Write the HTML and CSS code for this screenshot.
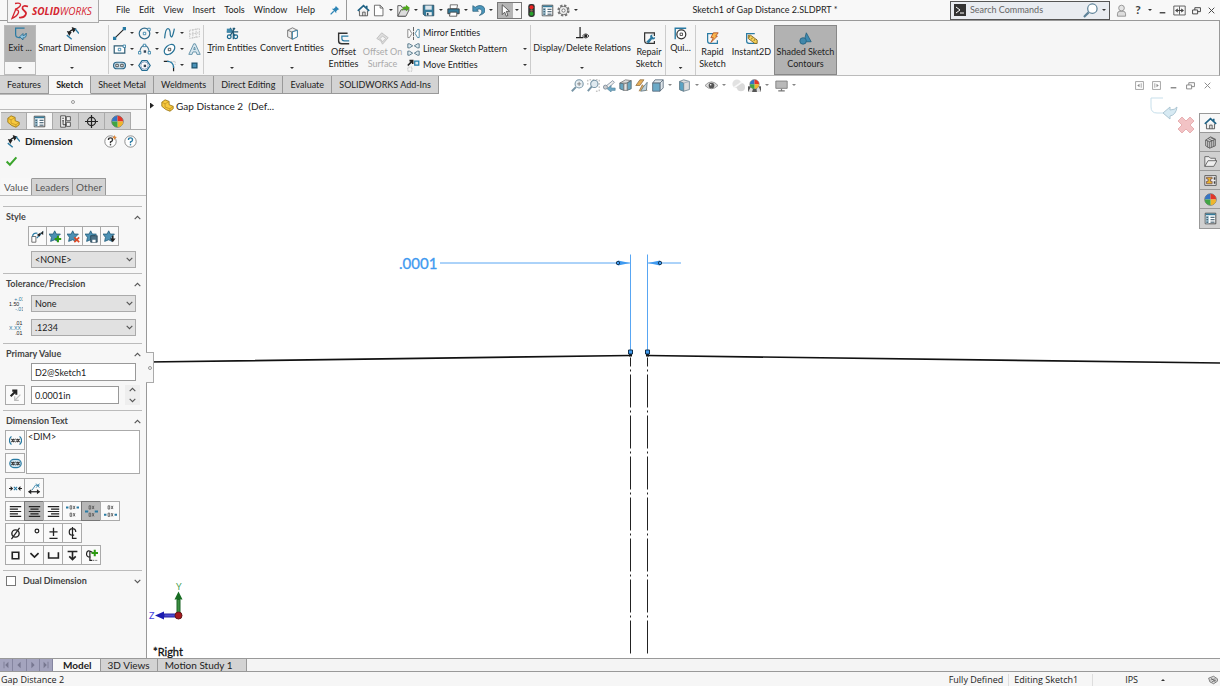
FILE: index.html
```html
<!DOCTYPE html>
<html lang="en">
<head>
<meta charset="utf-8">
<title>Sketch1 of Gap Distance 2.SLDPRT *</title>
<link rel="stylesheet" href="styles.css">
</head>
<body>
<svg class="sprite" aria-hidden="true">
  <symbol id="home" viewBox="0 0 16 16"><path d="M3 8v6.500h10V8" fill="#eee" stroke="#444"/><path d="M7 14.500V10h3v4.500" fill="none" stroke="#444"/><path d="M1 8.500 8 2l7 6.500M12 5V2" fill="none" stroke="#1f6285" stroke-width="2"/></symbol>
  <symbol id="new" viewBox="0 0 16 16"><path d="M3 1.500h7l3.500 3.500v9.500H3zM10 1.500V5h3.500" fill="#fff" stroke="#555"/></symbol>
  <symbol id="open" viewBox="0 0 16 16"><path d="M1 15V2h4l1 2h4v11z" fill="#f0f0f0" stroke="#444"/><path d="M1 15l4-8h10l-4 8z" fill="#ddd" stroke="#444"/><path d="M6 9c0-4 2-6 5-6V1l5 4-5 4V6c-2 0-4 0-5 3z" fill="#4fa81c"/></symbol>
  <symbol id="save" viewBox="0 0 16 16"><path d="M1.500 1.500h13v13h-11l-2-2z" fill="#347b9b" stroke="#27475a"/><path d="M4 2h8v5H4z" fill="#dce6ec"/><path d="M5 10h7v4H5z" fill="#eee"/><path d="M6 11h2v3H6z" fill="#27475a"/></symbol>
  <symbol id="print" viewBox="0 0 16 16"><path d="M4 1h9l-1 5H4z" fill="#fff" stroke="#555"/><path d="M1 6h14v6H1z" fill="#347b9b" stroke="#333"/><path d="M4 10h8v5H3z" fill="#fff" stroke="#444"/></symbol>
  <symbol id="undo" viewBox="0 0 16 16"><path d="M1 2v7h7L6 7c4-2 6 0 6 2s-1 4-3 5c4-1 7-3 7-6 0-6-7-8-12-4z" fill="#4b95ba" stroke="#1e5470" stroke-width=".8"/></symbol>
  <symbol id="cursor" viewBox="0 0 16 16"><path d="M4 1v12l3-3 2 5 2-1-2-5h4z" fill="#fff" stroke="#444"/></symbol>
  <symbol id="lights" viewBox="0 0 16 16"><rect x="4" y="0" width="8" height="16" rx="3" fill="#333"/><circle cx="8" cy="4" r="2.500" fill="#e22"/><circle cx="8" cy="8" r="1.500" fill="#865"/><circle cx="8" cy="12" r="2.500" fill="#28a22b"/></symbol>
  <symbol id="list" viewBox="0 0 16 16"><path d="M1.500 1.500h13v13h-13z" fill="#fff" stroke="#333"/><path d="M2 2h12v2H2z" fill="#347b9b"/><path d="M2 5h4v9H2z" fill="#a4c4d3"/><path d="M3 6.500h2M3 9.500h2M3 12.500h2M8 6.500h5M8 9.500h5M8 12.500h5" stroke="#27475a" stroke-width="1.200"/></symbol>
  <symbol id="gear" viewBox="0 0 16 16"><circle cx="8" cy="8" r="6" fill="none" stroke="#777" stroke-width="3" stroke-dasharray="2.800 1.900"/><circle cx="8" cy="8" r="5" fill="#eee" stroke="#666"/><circle cx="8" cy="8" r="2" fill="#fff" stroke="#666"/></symbol>
  <symbol id="pin" viewBox="0 0 16 16"><path d="M9 1l6 6-2 0-3 3v3L3 6h3l3-3z" fill="#2c84b5"/><path d="M6 10l-5 5" stroke="#2c84b5" stroke-width="2"/></symbol>
  <symbol id="exit" viewBox="0 0 16 16"><path d="M13 1.500H2V9q0 4 4 4h2" fill="none" stroke="#2a7ba3" stroke-width="1.500"/><path d="M7 12l4-4v2.500q3 0 4-3 1 6-4 6V16z" fill="#8cc3e0" stroke="#23668a"/></symbol>
  <symbol id="dim" viewBox="0 0 16 16"><path d="M3 8Q5 4 10 3" fill="none" stroke="#222" stroke-width="1.500"/><path d="M1 5l6 1-3 5zM7 0l6 2-4 5z" fill="#222"/><path d="M1 10l6 5M11 2l5 6" stroke="#2a7ba3" stroke-width="1.700"/></symbol>
  <symbol id="line" viewBox="0 0 16 16"><path d="M2.500 13.500l11-11" stroke="#222" stroke-width="1.300"/><path d="M0 12h4v4H0zM12 0h4v4h-4z" fill="#287aa3"/></symbol>
  <symbol id="circle" viewBox="0 0 16 16"><circle cx="8" cy="8" r="6.500" fill="none" stroke="#346d8d" stroke-width="1.500"/><path d="M6.500 6.500h3v3h-3zM12 1.500h3v3h-3z" fill="#fff" stroke="#287aa3"/></symbol>
  <symbol id="spline" viewBox="0 0 16 16"><path d="M2 14Q3 2 6 2t3 8q2 7 5-8" fill="none" stroke="#267296" stroke-width="1.500"/></symbol>
  <symbol id="plane" viewBox="0 0 16 16"><path d="M2 4l12-2v10L2 14zM6 3v11M10 2v11M2 9l12-2" fill="none" stroke="#bbb" stroke-dasharray="2 1"/></symbol>
  <symbol id="rect" viewBox="0 0 16 16"><path d="M1.500 3.500h13v9h-13z" fill="#fff" stroke="#315e76" stroke-width="1.500"/><path d="M6.500 6.500h3v3h-3zM12.500 2.500h3v3h-3z" fill="#fff" stroke="#287aa3"/></symbol>
  <symbol id="arc" viewBox="0 0 16 16"><path d="M2 12Q3 3 8 3t6 9" fill="none" stroke="#346d8d" stroke-width="1.300"/><path d="M.5 10.500h3v3h-3zM12.500 10.500h3v3h-3zM6.500 1.500h3v3h-3z" fill="#fff" stroke="#287aa3"/><path d="M7 9h3v3H7z" fill="#345"/></symbol>
  <symbol id="ellipse" viewBox="0 0 16 16"><ellipse cx="8" cy="8" rx="7.500" ry="5" transform="rotate(-42 8 8)" fill="#fff" stroke="#267296" stroke-width="1.500"/><path d="M6.500 6.500h3v3h-3z" fill="none" stroke="#333"/></symbol>
  <symbol id="letter" viewBox="0 0 16 16"><path d="M1 14L7 1h2l6 13h-4l-1-3H6l-1 3zM7 8h2L8 5z" fill="#d7e6ee" stroke="#51869f"/></symbol>
  <symbol id="slot" viewBox="0 0 16 16"><rect x=".7" y="4" width="14.600" height="8" rx="4" fill="#c8dfeb" stroke="#2c6789" stroke-width="1.500"/><path d="M3.500 6.500h3v3h-3zM9.500 6.500h3v3h-3z" fill="#fff" stroke="#333"/></symbol>
  <symbol id="poly" viewBox="0 0 16 16"><path d="M5 2h6l4 6-4 6H5L1 8z" fill="#fff" stroke="#246d93" stroke-width="1.500"/><circle cx="8" cy="8" r="4.500" fill="none" stroke="#89b"/><path d="M7 7h3v3H7z" fill="#345"/></symbol>
  <symbol id="fillet" viewBox="0 0 16 16"><path d="M1 3h6M13 9v6" stroke="#222" stroke-width="1.500"/><path d="M5 3q8 0 8 8" fill="none" stroke="#287aa3" stroke-width="1.500"/><path d="M10 3h5v4" fill="none" stroke="#aaa" stroke-dasharray="1 1"/></symbol>
  <symbol id="point" viewBox="0 0 16 16"><path d="M5 5h6v6H5z" fill="#4a93b9" stroke="#1c526e" stroke-width="1.500"/></symbol>
  <symbol id="trim" viewBox="0 0 16 16"><path d="M5 1l6 10M11 1L5 11M9 1v14M1 6h14" stroke="#235a75" stroke-width="1.500"/><path d="M1 2h6v5H1z" fill="#4189ac"/><circle cx="4" cy="12" r="2.300" fill="none" stroke="#17678e" stroke-width="1.500"/><circle cx="12" cy="12" r="2.300" fill="none" stroke="#17678e" stroke-width="1.500"/></symbol>
  <symbol id="cube" viewBox="0 0 16 16"><path d="M2 4l6-3 6 3v8l-6 3-6-3z" fill="#eee" stroke="#666"/><path d="M2 4l5 2 7-2M7 6v9" fill="none" stroke="#666"/><path d="M8 6l6-2v8l-6 3z" fill="#fff" stroke="#2a7ba3"/></symbol>
  <symbol id="offset" viewBox="0 0 16 16"><path d="M13 1.500H2V11q0 3.500 4 3.500h9" fill="none" stroke="#333" stroke-width="1.700"/><path d="M14 5H6v3q0 3 3 3h6" fill="none" stroke="#2a7ba3" stroke-width="1.500"/></symbol>
  <symbol id="surf" viewBox="0 0 16 16"><path d="M1 8l6-7 8 6-7 8-2-4z" fill="#ddd" stroke="#bbb"/><path d="M5 8l3-3 4 3-4 4z" fill="#f4f4f4" stroke="#bbb"/></symbol>
  <symbol id="mirror" viewBox="0 0 16 16"><path d="M8 0v16" stroke="#444" stroke-dasharray="5 1"/><path d="M1 3v10h2l3-5-3-5z" fill="#fff" stroke="#777"/><path d="M15 3v10h-2l-3-5 3-5z" fill="#fff" stroke="#347b9b"/></symbol>
  <symbol id="pattern" viewBox="0 0 16 16"><path d="M1 1h2l4 2.500L3 6H1zM1 10h2l4 2.500L3 15H1zM15 1h-2L9 3.500 13 6h2zM15 10h-2l-4 2.500 4 2.500h2z" fill="#dbe8ee" stroke="#44677a"/></symbol>
  <symbol id="move" viewBox="0 0 16 16"><path d="M1 8l5-5M3 2h4v4" fill="none" stroke="#222" stroke-width="2"/><path d="M9.500 2.500h5v5h-5z" fill="#dcecf4" stroke="#237da9" stroke-width="1.500"/><path d="M1 10h5v5H1z" fill="none" stroke="#aaa" stroke-dasharray="1 1"/></symbol>
  <symbol id="relations" viewBox="0 0 16 16"><path d="M5 0v13M0 13h9" stroke="#222" stroke-width="1.500"/><path d="M8 11q4-5 8 0-4 5-8 0z" fill="#fff" stroke="#222"/><circle cx="12" cy="11" r="2" fill="#222"/></symbol>
  <symbol id="repair" viewBox="0 0 16 16"><path d="M14 5V1H2v9q0 4 4 4h8v-3" fill="none" stroke="#333" stroke-width="1.500"/><path d="M4 12l5-5q-1-4 3-4l-1 2 2 2 2-1q0 4-4 3l-4 5z" fill="#2b789f"/></symbol>
  <symbol id="snap" viewBox="0 0 16 16"><path d="M1.500 15V1.500H15" fill="none" stroke="#287aa3" stroke-width="1.700"/><circle cx="9" cy="9" r="5.500" fill="#fff" stroke="#333" stroke-width="1.500"/><path d="M7.500 7.500h3v3h-3z" fill="none" stroke="#333"/></symbol>
  <symbol id="rapid" viewBox="0 0 16 16"><path d="M14 10v4H5q-3 0-3-3V2h10" fill="none" stroke="#2a7ba3" stroke-width="1.500"/><path d="M9 1h6l-3 4h2l-8 8 3-6H6z" fill="#f9b74e" stroke="#b34a1c"/></symbol>
  <symbol id="instant" viewBox="0 0 16 16"><path d="M14 9v5H5q-3 0-3-3V2h10" fill="none" stroke="#2a7ba3" stroke-width="1.500"/><path d="M4 4h3l8 6v4h-3L4 8z" fill="#f5d15a" stroke="#775b16"/><path d="M6 5l-1 2M9 7l-1 2M12 9l-1 2" stroke="#775b16"/></symbol>
  <symbol id="shaded" viewBox="0 0 16 16"><path d="M9 1l6 11H6z" fill="#3e89b0" stroke="#24617f"/><circle cx="5" cy="11" r="4" fill="#4187aa" stroke="#24617f"/></symbol>
  <symbol id="mag" viewBox="0 0 16 16"><circle cx="10" cy="6" r="5" fill="#fff" stroke="#5d8298" stroke-width="1.300"/><path d="M6 10l-5 5" stroke="#5d8298" stroke-width="2.300"/></symbol>
  <symbol id="magfit" viewBox="0 0 16 16"><circle cx="10" cy="6" r="5" fill="#e8eff3" stroke="#7895a6" stroke-width="1.300"/><path d="M6 10l-5 5" stroke="#7895a6" stroke-width="2.500"/><path d="M7.500 6h5M10 3.500v5" stroke="#777"/></symbol>
  <symbol id="magarea" viewBox="0 0 16 16"><path d="M1 7V1h14v14h-4" fill="none" stroke="#999" stroke-dasharray="2 2"/><circle cx="9" cy="6" r="4.500" fill="#dfe9ef" stroke="#7895a6" stroke-width="1.300"/><path d="M6 9l-5 6" stroke="#7895a6" stroke-width="2.300"/></symbol>
  <symbol id="prev" viewBox="0 0 16 16"><path d="M2 10L12 2l2 2-7 7" fill="#eee" stroke="#789"/><path d="M5 12l5-4v3h5v3h-5v2z" fill="#6da7c4" stroke="#47778f" stroke-width=".6"/><circle cx="3" cy="10" r="2.500" fill="#ccc" stroke="#789"/></symbol>
  <symbol id="section" viewBox="0 0 16 16"><path d="M1 5l7-4 7 1-6 3z" fill="#ddd" stroke="#777"/><path d="M1 5l5 1v8l-5-2zM10 5l5-3v10l-5 2z" fill="#69a6c1" stroke="#52656e"/><path d="M6 6l4-1v9H6z" fill="#e2e2e2" stroke="#777"/></symbol>
  <symbol id="dyn" viewBox="0 0 16 16"><path d="M1 8L6 1h5L6 8zM5 15l4-8 6 7" fill="#e5ad56" stroke="#96754b"/><path d="M7 15l3-5 5-6-1 10z" fill="#c2d3db" stroke="#607785"/></symbol>
  <symbol id="orient" viewBox="0 0 16 16"><path d="M2 5l3-4h10v10l-4 4V5z" fill="#dfe6ea" stroke="#567"/><path d="M2 5h9v10H2z" fill="#6caac7" stroke="#567"/><path d="M11 5l4-4" stroke="#567"/></symbol>
  <symbol id="box" viewBox="0 0 16 16"><path d="M2 3l5-2 7 2v10l-7 2-5-2z" fill="#ddd" stroke="#69808c"/><path d="M2 3l5 2v10l-5-2z" fill="#5ba4c5" stroke="#69808c"/><path d="M7 5l7-2" stroke="#9ab"/></symbol>
  <symbol id="eye" viewBox="0 0 16 16"><path d="M0 8q8-9 16 0-8 8-16 0z" fill="#ddd" stroke="#888"/><circle cx="8" cy="8" r="3.500" fill="#555"/><circle cx="7" cy="7" r="1" fill="#fff"/></symbol>
  <symbol id="ballgrey" viewBox="0 0 16 16"><circle cx="6" cy="6" r="5.500" fill="#e2e2e2"/><circle cx="11" cy="10" r="5" fill="#dadada"/><path d="M2 11l10-7" stroke="#f8f8f8" stroke-width="2"/></symbol>
  <symbol id="ball" viewBox="0 0 16 16"><circle cx="8" cy="8" r="7" fill="#eee" stroke="#555"/><path d="M8 8V1a7 7 0 0 0-7 7z" fill="#3574c4"/><path d="M8 8V1a7 7 0 0 1 7 7z" fill="#e33629"/><path d="M8 8h7a7 7 0 0 1-7 7z" fill="#efb52c"/><path d="M8 8v7a7 7 0 0 1-7-7z" fill="#40a544"/></symbol>
  <symbol id="scene" viewBox="0 0 16 16"><path d="M0 16V9h16v7z" fill="#555"/><path d="M0 16l4-7h3l-2 7zM11 16l-1-7h3l3 7z" fill="#ddd"/><svg x="1" y="0" width="14" height="13"><use href="#ball"/></svg></symbol>
  <symbol id="monitor" viewBox="0 0 16 16"><path d="M1 2.500h14v9H1z" fill="#b9b9b9" stroke="#777"/><path d="M8 12v2M4 14.500h8" stroke="#777" stroke-width="1.500"/></symbol>
  <symbol id="user" viewBox="0 0 16 16"><circle cx="8" cy="5" r="3.500" fill="#e5e5e5" stroke="#888"/><path d="M3 15v-3q0-3 3-3h4q3 0 3 3v3z" fill="#ddd" stroke="#888"/></symbol>
  <symbol id="min" viewBox="0 0 16 16"><path d="M3 12h10" stroke="currentColor" stroke-width="2.500"/></symbol>
  <symbol id="span" viewBox="0 0 16 16"><path d="M1 2.500h14v11H1zM8 3v10" fill="none" stroke="currentColor"/><path d="M3 8h10M6 6L3.500 8 6 10M10 6l2.500 2L10 10" fill="none" stroke="currentColor" stroke-width="1.300"/></symbol>
  <symbol id="restore" viewBox="0 0 16 16"><path d="M1 7h9v7H1zM5 7V3h10v7h-5" fill="none" stroke="currentColor" stroke-width="1.700"/></symbol>
  <symbol id="close" viewBox="0 0 16 16"><path d="M3 3l10 10M13 3L3 13" stroke="currentColor" stroke-width="1.700"/></symbol>
  <symbol id="dockl" viewBox="0 0 16 16"><path d="M1 1h14v14H1zM11 4v8" fill="none" stroke="currentColor" stroke-width="1.300"/><path d="M8 5v6L4 8z" fill="currentColor"/></symbol>
  <symbol id="dockr" viewBox="0 0 16 16"><path d="M1 1h14v14H1zM5 4v8" fill="none" stroke="currentColor" stroke-width="1.300"/><path d="M8 5v6l4-3z" fill="currentColor"/></symbol>
  <symbol id="part" viewBox="0 0 16 16"><path d="M1 4l4-3 5 2v4l5 2v3l-4 3-5-2-5-4z" fill="#f8c93e" stroke="#94700f"/><path d="M1 4l4 2 5-3M5 6v4l6 2 4-3M11 12v3" fill="none" stroke="#b68a1d" stroke-width=".8"/></symbol>
  <symbol id="config" viewBox="0 0 16 16"><path d="M2 1h6v14H2z" fill="#eee" stroke="#444"/><path d="M4 4h2M4 7h2M5 7v5h5" stroke="#222" fill="none"/><path d="M9 2h5v5H9zM9 9h5v5H9z" fill="#eee" stroke="#444"/></symbol>
  <symbol id="target" viewBox="0 0 16 16"><circle cx="8" cy="8" r="5" fill="none" stroke="#222" stroke-width="1.500"/><path d="M8 0v16M0 8h16" stroke="#222" stroke-width="1.500"/></symbol>
  <symbol id="help" viewBox="0 0 16 16"><circle cx="8" cy="8" r="7" fill="#fff" stroke="#777"/><path d="M5.500 6q0-2.500 2.500-2.500T10.500 6q0 1.500-2.500 2.500V10" fill="none" stroke="currentColor" stroke-width="1.700"/><circle cx="8" cy="12" r="1" fill="currentColor"/></symbol>
  <symbol id="whatsnew" viewBox="0 0 16 16"><use href="#help"/><path d="M13 0l1 2 2 .5-2 1.500-1 2-1-2-2-1 2-1z" fill="#e08a3c"/></symbol>
  <symbol id="check" viewBox="0 0 16 16"><path d="M2 8l4 4 8-9" fill="none" stroke="#3ba52c" stroke-width="2.500"/></symbol>
  <symbol id="star" viewBox="0 0 16 16"><path d="M7 1l2 4 5 0-4 4 1 5-4-2-5 2 1-5-3-4h5z" fill="#4c91b4" stroke="#245e7b"/></symbol>
  <symbol id="starplus" viewBox="0 0 16 16"><use href="#star"/><path d="M11 7v8M7 11h8" stroke="#2c9a12" stroke-width="2.500"/></symbol>
  <symbol id="starx" viewBox="0 0 16 16"><use href="#star"/><path d="M9 9l6 6M15 9l-6 6" stroke="#dd4824" stroke-width="2"/></symbol>
  <symbol id="starsave" viewBox="0 0 16 16"><use href="#star"/><path d="M7 7h8v8H7z" fill="#4b7186" stroke="#223f50"/><path d="M9 12h4v3H9z" fill="#fff"/></symbol>
  <symbol id="stardown" viewBox="0 0 16 16"><use href="#star"/><path d="M12 7v4" stroke="#222" stroke-width="2"/><path d="M8.500 10.500h7L12 15z" fill="#222"/></symbol>
  <symbol id="styledim" viewBox="0 0 16 16"><path d="M1 8h5v7H1z" fill="#fff" stroke="#555"/><path d="M7 10l8-8M2 8q0-5 6-4" fill="none" stroke="#287aa3" stroke-width="1.500"/><path d="M7 6l5-3-1 5zM12 4l3-3v5z" fill="#222"/></symbol>
  <symbol id="tol" viewBox="0 0 16 16"><g font-family="Liberation Sans" font-size="6"><text x="0" y="10" fill="#222">1.50</text><text x="6" y="5" fill="#287aa3">+.01</text><text x="7" y="16" fill="#287aa3">-.01</text></g></symbol>
  <symbol id="prec" viewBox="0 0 16 16"><g font-family="Liberation Sans" font-size="6"><text x="0" y="10" fill="#287aa3">X.XX</text><text x="7" y="5" fill="#222">.01</text><text x="7" y="16" fill="#222">.01</text></g></symbol>
  <symbol id="swap" viewBox="0 0 16 16"><path d="M2 9l6-6M4 2h5v5" fill="none" stroke="#222" stroke-width="2.500"/><path d="M14 7l-6 6M7 9v5h5" fill="none" stroke="#bbb" stroke-width="1.500"/></symbol>
  <symbol id="paren" viewBox="0 0 16 16"><path d="M3 3Q-2 8 3 13M13 3q5 5 0 10" fill="none" stroke="#2a7ba3" stroke-width="1.500"/><path d="M3 6l3 4M6 6l-3 4M10 6l3 4M13 6l-3 4" stroke="#333" stroke-width="1.300"/><circle cx="8" cy="8" r="1.700" fill="none" stroke="#333"/></symbol>
  <symbol id="inspect" viewBox="0 0 16 16"><rect x="1" y="3" width="14" height="10" rx="5" fill="#cfe3ee" stroke="#2a7ba3" stroke-width="1.500"/><path d="M3 6l3 4M6 6l-3 4M10 6l3 4M13 6l-3 4" stroke="#333" stroke-width="1.300"/><circle cx="8" cy="8" r="1.700" fill="none" stroke="#333"/></symbol>
  <symbol id="centerdim" viewBox="0 0 16 16"><path d="M0 8h4M12 8h4" stroke="#222" stroke-width="1.300"/><path d="M2 5l3 3-3 3zM14 5l-3 3 3 3z" fill="#222"/><path d="M6 6l4 4M10 6l-4 4" stroke="#287aa3" stroke-width="1.300"/></symbol>
  <symbol id="leader" viewBox="0 0 16 16"><path d="M1 12h13" stroke="#222" stroke-width="1.500"/><path d="M4 9v6l-4-3zM11 9v6l4-3z" fill="#222"/><path d="M5 10l4-6h5M10 2l4 5M14 2l-4 5" fill="none" stroke="#287aa3"/></symbol>
  <symbol id="left" viewBox="0 0 16 16"><path d="M1 2h14M1 5h10M1 8h14M1 11h10M1 14h14" stroke="#222" stroke-width="1.500"/></symbol>
  <symbol id="center" viewBox="0 0 16 16"><path d="M1 2h14M3 5h10M1 8h14M3 11h10M1 14h14" stroke="#222" stroke-width="1.500"/></symbol>
  <symbol id="right" viewBox="0 0 16 16"><path d="M1 2h14M5 5h10M1 8h14M5 11h10M1 14h14" stroke="#222" stroke-width="1.500"/></symbol>
  <symbol id="glyphs" viewBox="0 0 16 16"><path d="M5 1h2v4H5zM9 1l2 4M11 1L9 5M5 10h2v4H5zM9 10l2 4M11 10l-2 4" fill="none" stroke="#555"/></symbol>
  <symbol id="jtop" viewBox="0 0 16 16"><use href="#glyphs"/><path d="M0 3h3M13 3h3" stroke="#2a7ba3" stroke-width="2.500"/></symbol>
  <symbol id="jmid" viewBox="0 0 16 16"><use href="#glyphs"/><path d="M0 8h4M12 8h4" stroke="#2a7ba3" stroke-width="2.500"/></symbol>
  <symbol id="jbot" viewBox="0 0 16 16"><use href="#glyphs"/><path d="M0 12h3M13 12h3" stroke="#2a7ba3" stroke-width="2.500"/></symbol>
  <symbol id="dia" viewBox="0 0 16 16"><circle cx="8" cy="8" r="4.500" fill="none" stroke="#222" stroke-width="1.700"/><path d="M3 15L13 1" stroke="#222" stroke-width="1.500"/></symbol>
  <symbol id="deg" viewBox="0 0 16 16"><circle cx="11" cy="5" r="2.300" fill="none" stroke="#222" stroke-width="1.500"/></symbol>
  <symbol id="pm" viewBox="0 0 16 16"><path d="M8 1v10M3 6h10M3 14h10" stroke="#222" stroke-width="1.600"/></symbol>
  <symbol id="cl" viewBox="0 0 16 16"><path d="M12 6q0-4-4-4T4 6q0 4 4 4h2M8 0v14h5" fill="none" stroke="#222" stroke-width="1.500"/></symbol>
  <symbol id="sq" viewBox="0 0 16 16"><path d="M4 4h8v8H4z" fill="none" stroke="#222" stroke-width="2"/></symbol>
  <symbol id="sink" viewBox="0 0 16 16"><path d="M3 5l5 5 5-5" fill="none" stroke="#222" stroke-width="2"/></symbol>
  <symbol id="bore" viewBox="0 0 16 16"><path d="M2 4v7h12V4" fill="none" stroke="#222" stroke-width="2"/></symbol>
  <symbol id="depth" viewBox="0 0 16 16"><path d="M2 3h12M8 3v10M4 9l4 4 4-4" fill="none" stroke="#222" stroke-width="2"/></symbol>
  <symbol id="more" viewBox="0 0 16 16"><path d="M9 4Q3 0 2 5t5 5M6 2v12h3" fill="none" stroke="#222" stroke-width="1.500"/><path d="M10 14h5" stroke="#222" stroke-dasharray="1 1"/><path d="M12 1v8M8 5h8" stroke="#2c9a12" stroke-width="2.500"/></symbol>
  <symbol id="up" viewBox="0 0 16 16"><path d="M3 11l5-5 5 5" fill="none" stroke="#555" stroke-width="2"/></symbol>
  <symbol id="down" viewBox="0 0 16 16"><path d="M3 5l5 5 5-5" fill="none" stroke="#555" stroke-width="2"/></symbol>
  <symbol id="library" viewBox="0 0 16 16"><path d="M2 5l6-4 6 3v8l-7 3-5-3z" fill="#ccc" stroke="#555"/><path d="M2 5l5 2 7-3M7 7v8M4.500 6v8M9.500 6v8M12 5v8M5 3l5 3M8 2l5 2" fill="none" stroke="#555"/></symbol>
  <symbol id="folder" viewBox="0 0 16 16"><path d="M1 14V2h5l2 2h6v3M1 14l4-7h11l-4 7z" fill="#eee" stroke="#555"/></symbol>
  <symbol id="palette" viewBox="0 0 16 16"><path d="M1 2h14v12H1z" fill="#eee" stroke="#444"/><path d="M3 4h7v2H8v3h2v3H3v-3h2V6H3z" fill="#e8b22e" stroke="#755"/><path d="M12 4h2v3h-2zM12 9h2v3h-2z" fill="#444"/></symbol>
  <symbol id="tag" viewBox="0 0 16 16"><path d="M1 5l8-3 6 4v4l-6 4-6-3z" fill="#ddd" stroke="#444"/><path d="M4 8l8-2M6 11l7-3M5 5l7 6" stroke="#444"/></symbol>
</svg>

<div class="app">
  <header class="titlebar">
    <div class="logo" role="img" aria-label="SOLIDWORKS">
      <svg class="ds" viewBox="0 0 18 18"><path d="M4 1.500q6-1 5.500 1.500Q9 5 4 7.500q4 0 3.500 3Q6.500 14 1 16.500L4.500 8" fill="none" stroke="#d4252f" stroke-width="1.300"/><path d="M17 4.500q-5-1.500-5.500 1-.5 1.500 2 3.500 2.500 2 1 4Q13 16 8 15.500" fill="none" stroke="#d4252f" stroke-width="1.700"/></svg>
      <span class="logo-word"><b>SOLID</b>WORKS</span>
    </div>
    <nav class="menu"><a href="#">File</a><a href="#">Edit</a><a href="#">View</a><a href="#">Insert</a><a href="#">Tools</a><a href="#">Window</a><a href="#">Help</a></nav>
    <svg class="ico sm"><use href="#pin"/></svg>
    <div class="quick">
      <button aria-label="Home"><svg class="ico"><use href="#home"/></svg></button>
      <button aria-label="New"><svg class="ico"><use href="#new"/></svg><i class="caret"></i></button>
      <button aria-label="Open"><svg class="ico"><use href="#open"/></svg><i class="caret"></i></button>
      <button aria-label="Save"><svg class="ico"><use href="#save"/></svg><i class="caret"></i></button>
      <button aria-label="Print"><svg class="ico"><use href="#print"/></svg><i class="caret"></i></button>
      <button aria-label="Undo"><svg class="ico"><use href="#undo"/></svg><i class="caret"></i></button>
      <button class="select-tool" aria-label="Select"><span><svg class="ico"><use href="#cursor"/></svg></span><i class="caret"></i></button>
      <button class="plain" aria-label="Rebuild"><svg class="ico"><use href="#lights"/></svg></button>
      <button class="plain" aria-label="Properties"><svg class="ico"><use href="#list"/></svg></button>
      <button aria-label="Options"><svg class="ico"><use href="#gear"/></svg><i class="caret"></i></button>
    </div>
    <h1 class="doc-title">Sketch1 of Gap Distance 2.SLDPRT *</h1>
    <div class="search"><svg class="prompt" viewBox="0 0 12 12"><path d="M0 0h12v12H0z" fill="#333"/><path d="M2 3l4 3-4 3M6 9h4" fill="none" stroke="#fff"/></svg><input aria-label="Search Commands" placeholder="Search Commands"><svg class="ico lens"><use href="#mag"/></svg><i class="caret"></i></div>
    <div class="window-buttons">
      <button aria-label="Login"><svg class="ico"><use href="#user"/></svg></button>
      <button class="question" aria-label="Help">?</button><i class="caret"></i>
      <button aria-label="Minimize"><svg class="ico xs"><use href="#min"/></svg></button>
      <button aria-label="Span"><svg class="ico"><use href="#span"/></svg></button>
      <button aria-label="Restore"><svg class="ico xs"><use href="#restore"/></svg></button>
      <button aria-label="Close"><svg class="ico xs"><use href="#close"/></svg></button>
    </div>
  </header>

  <section class="ribbon">
    <button class="cmd exit"><span class="face"><svg class="ico"><use href="#exit"/></svg>Exit ...</span><i class="caret"></i></button>
    <button class="cmd w72"><svg class="ico"><use href="#dim"/></svg>Smart Dimension<i class="caret"></i></button>
    <div class="tools">
      <svg class="ico"><use href="#line"/></svg><i class="caret"></i><svg class="ico"><use href="#circle"/></svg><i class="caret"></i><svg class="ico"><use href="#spline"/></svg><i class="caret"></i><svg class="ico"><use href="#plane"/></svg>
      <svg class="ico"><use href="#rect"/></svg><i class="caret"></i><svg class="ico"><use href="#arc"/></svg><i class="caret"></i><svg class="ico"><use href="#ellipse"/></svg><i class="caret"></i><svg class="ico"><use href="#letter"/></svg>
      <svg class="ico"><use href="#slot"/></svg><i class="caret"></i><svg class="ico"><use href="#poly"/></svg><b></b><svg class="ico"><use href="#fillet"/></svg><i class="caret"></i><svg class="ico"><use href="#point"/></svg>
    </div>
    <button class="cmd w56"><svg class="ico"><use href="#trim"/></svg><span><u>T</u>rim Entities</span><i class="caret"></i></button>
    <button class="cmd w64"><svg class="ico"><use href="#cube"/></svg>Convert Entities<i class="caret"></i></button>
    <button class="cmd two w40"><svg class="ico"><use href="#offset"/></svg><span>Offset<br>Entities</span></button>
    <button class="cmd two w40" disabled><svg class="ico"><use href="#surf"/></svg><span>Offset On<br>Surface</span></button>
    <div class="cmd-list">
      <button><svg class="ico"><use href="#mirror"/></svg>Mirror Entities</button>
      <button><svg class="ico"><use href="#pattern"/></svg>Linear Sketch Pattern<i class="caret"></i></button>
      <button><svg class="ico"><use href="#move"/></svg>Move Entities<i class="caret"></i></button>
    </div>
    <button class="cmd w102"><svg class="ico"><use href="#relations"/></svg>Display/Delete Relations<i class="caret"></i></button>
    <button class="cmd two w32 ruled"><svg class="ico"><use href="#repair"/></svg><span>Repair<br>Sketch</span></button>
    <button class="cmd w30 ruled"><svg class="ico"><use href="#snap"/></svg>Qui...<i class="caret"></i></button>
    <button class="cmd two w32"><svg class="ico"><use href="#rapid"/></svg><span>Rapid<br>Sketch</span></button>
    <button class="cmd two w45"><svg class="ico"><use href="#instant"/></svg><span>Instant2D</span></button>
    <button class="cmd two pressed w63"><svg class="ico"><use href="#shaded"/></svg><span>Shaded Sketch<br>Contours</span></button>
  </section>

  <div class="tab-row">
    <div class="tabs ribbon-tabs"><button>Features</button><button class="on">Sketch</button><button>Sheet Metal</button><button>Weldments</button><button>Direct Editing</button><button>Evaluate</button><button>SOLIDWORKS Add-Ins</button></div>
    <div class="view-tools">
      <svg class="ico"><use href="#magfit"/></svg><svg class="ico"><use href="#magarea"/></svg><svg class="ico"><use href="#prev"/></svg><svg class="ico"><use href="#section"/></svg><svg class="ico"><use href="#dyn"/></svg><svg class="ico"><use href="#orient"/></svg><i class="caret"></i><svg class="ico"><use href="#box"/></svg><i class="caret"></i><svg class="ico"><use href="#eye"/></svg><i class="caret"></i><svg class="ico"><use href="#ballgrey"/></svg><svg class="ico"><use href="#scene"/></svg><i class="caret"></i><svg class="ico"><use href="#monitor"/></svg><i class="caret"></i>
    </div>
    <div class="doc-buttons"><button aria-label="Dock left"><svg class="ico xs"><use href="#dockl"/></svg></button><button aria-label="Dock right"><svg class="ico xs"><use href="#dockr"/></svg></button><button aria-label="Minimize document"><svg class="ico xs"><use href="#min"/></svg></button><button aria-label="Restore document"><svg class="ico xs"><use href="#restore"/></svg></button><button aria-label="Close document"><svg class="ico xs"><use href="#close"/></svg></button></div>
  </div>

  <main class="work">
    <aside class="panel">
      <div class="grip"><i class="dot"></i></div>
      <div class="manager-tabs"><button aria-label="Feature tree"><svg class="ico"><use href="#part"/></svg></button><button class="on" aria-label="Properties"><svg class="ico"><use href="#list"/></svg></button><button aria-label="Configurations"><svg class="ico"><use href="#config"/></svg></button><button aria-label="Dimensions"><svg class="ico"><use href="#target"/></svg></button><button aria-label="Display"><svg class="ico"><use href="#ball"/></svg></button></div>
      <div class="panel-head"><svg class="ico"><use href="#dim"/></svg><h2>Dimension</h2><svg class="ico q1"><use href="#whatsnew"/></svg><svg class="ico q2"><use href="#help"/></svg></div>
      <button class="ok" aria-label="OK"><svg class="ico"><use href="#check"/></svg></button>
      <div class="tabs value-tabs"><button class="on">Value</button><button>Leaders</button><button>Other</button></div>

      <section class="group">
        <h3>Style<svg class="ico xs"><use href="#up"/></svg></h3>
        <div class="btns style-btns"><button aria-label="Apply defaults"><svg class="ico"><use href="#styledim"/></svg></button><button aria-label="Add style"><svg class="ico"><use href="#starplus"/></svg></button><button aria-label="Delete style"><svg class="ico"><use href="#starx"/></svg></button><button aria-label="Save style"><svg class="ico"><use href="#starsave"/></svg></button><button aria-label="Load style"><svg class="ico"><use href="#stardown"/></svg></button></div>
        <div class="field"><span></span><div class="drop"><select aria-label="Style"><option>&lt;NONE&gt;</option></select><svg class="ico xs"><use href="#down"/></svg></div></div>
      </section>
      <section class="group roomy">
        <h3>Tolerance/Precision<svg class="ico xs"><use href="#up"/></svg></h3>
        <div class="field"><svg class="ico"><use href="#tol"/></svg><div class="drop"><select aria-label="Tolerance type"><option>None</option></select><svg class="ico xs"><use href="#down"/></svg></div></div>
        <div class="field spaced"><svg class="ico"><use href="#prec"/></svg><div class="drop"><select aria-label="Precision"><option>.1234</option></select><svg class="ico xs"><use href="#down"/></svg></div></div>
      </section>
      <section class="group">
        <h3>Primary Value<svg class="ico xs"><use href="#up"/></svg></h3>
        <div class="field"><span></span><input class="box" aria-label="Name" value="D2@Sketch1"></div>
        <div class="field value"><div class="btns"><button aria-label="Reverse"><svg class="ico"><use href="#swap"/></svg></button></div><input class="box" aria-label="Value" value="0.0001in"><div class="spin"><button aria-label="Increase"><svg class="ico xs"><use href="#up"/></svg></button><button aria-label="Decrease"><svg class="ico xs"><use href="#down"/></svg></button></div></div>
      </section>
      <section class="group">
        <h3>Dimension Text<svg class="ico xs"><use href="#up"/></svg></h3>
        <div class="dim-text"><div class="stack btns"><button aria-label="Parentheses"><svg class="ico"><use href="#paren"/></svg></button><button aria-label="Inspection"><svg class="ico"><use href="#inspect"/></svg></button></div><textarea aria-label="Dimension text">&lt;DIM&gt;</textarea></div>
        <div class="rows">
          <div class="btns"><button aria-label="Center dimension"><svg class="ico"><use href="#centerdim"/></svg></button><button aria-label="Offset text"><svg class="ico"><use href="#leader"/></svg></button></div>
          <div class="btns"><button aria-label="Left"><svg class="ico"><use href="#left"/></svg></button><button class="on" aria-label="Center"><svg class="ico"><use href="#center"/></svg></button><button aria-label="Right"><svg class="ico"><use href="#right"/></svg></button><button aria-label="Top"><svg class="ico"><use href="#jtop"/></svg></button><button class="on" aria-label="Middle"><svg class="ico"><use href="#jmid"/></svg></button><button aria-label="Bottom"><svg class="ico"><use href="#jbot"/></svg></button></div>
          <div class="btns"><button aria-label="Diameter"><svg class="ico"><use href="#dia"/></svg></button><button aria-label="Degree"><svg class="ico"><use href="#deg"/></svg></button><button aria-label="Plus minus"><svg class="ico"><use href="#pm"/></svg></button><button aria-label="Centerline"><svg class="ico"><use href="#cl"/></svg></button></div>
          <div class="btns"><button aria-label="Square"><svg class="ico"><use href="#sq"/></svg></button><button aria-label="Countersink"><svg class="ico"><use href="#sink"/></svg></button><button aria-label="Counterbore"><svg class="ico"><use href="#bore"/></svg></button><button aria-label="Depth"><svg class="ico"><use href="#depth"/></svg></button><button aria-label="More symbols"><svg class="ico"><use href="#more"/></svg></button></div>
        </div>
      </section>
      <section class="group dual">
        <h3><label><input type="checkbox">Dual Dimension</label><svg class="ico xs"><use href="#down"/></svg></h3>
      </section>
    </aside>

    <div class="canvas">
      <svg class="drawing" viewBox="147 94 1073 565" preserveAspectRatio="xMidYMid slice">
        <g stroke="#58a6f3" fill="#3f9af0">
          <path d="M440 263.500h190M648 263.500h33M630.500 255v97M647.500 255v97" fill="none"/>
          <path d="M618 261l12 2.500-12 2.500zM660 261l-12 2.500 12 2.500z" stroke="none"/>
          <circle cx="618" cy="263.500" r="1.700" stroke="#1c3c5b"/><circle cx="660" cy="263.500" r="1.700" stroke="#1c3c5b"/>
        </g>
        <text x="399" y="269" class="dim-value">.0001</text>
        <path d="M147 362.500L630 356M647.500 356L1220 363.500" stroke="#111" stroke-width="1.700"/>
        <path d="M630.500 358v299M647.500 358v299" stroke="#222" stroke-dasharray="33 3 2 3" stroke-dashoffset="24"/>
        <path d="M629 354h3v3h-3zM646 354h3v3h-3z" fill="#111"/>
        <path d="M628.500 350.500h4v4h-4zM645.500 350.500h4v4h-4z" fill="#3f9af0" stroke="#12304a"/>
        <path d="M177 614v-14h3v14z" fill="#3c8f42" stroke="#1a6224"/><path d="M174.500 600l4-8 4 8z" fill="#176c22"/>
        <path d="M178 614.500h-14v3h14z" fill="#4b4bd1" stroke="#2424a0"/><path d="M164 612v8l-9-4z" fill="#1b1bb0"/>
        <circle cx="178.500" cy="616" r="3.500" fill="#a51a1e" stroke="#62181a"/>
        <text x="176" y="590" class="axis" fill="#4aa152">Y</text><text x="149" y="619" class="axis" fill="#4646e0">Z</text>
        <text x="153" y="656" class="view-name">*Right</text>
      </svg>
      <div class="tree"><i class="tri"></i><svg class="ico"><use href="#part"/></svg><span>Gap Distance 2&nbsp; (Def...</span></div>
      <button class="splitter" aria-label="Collapse panel"><i class="dot"></i></button>
      <svg class="confirm" viewBox="0 0 48 36"><path d="M15 1H3v9q0 6 6 6h6" fill="none" stroke="#c7dfeb"/><path d="M15 16l7-6v3q5 0 7-3-1 8-7 9v3z" fill="#d7eaf3" stroke="#aec7d4"/><path d="M30 24l4-4 4 4 4-4 4 4-4 4 4 4-4 4-4-4-4 4-4-4 4-4z" fill="#f2c3c5" stroke="#e7b0b2"/></svg>
      <div class="task-pane"><button class="on" aria-label="Resources"><svg class="ico"><use href="#home"/></svg></button><button aria-label="Design library"><svg class="ico"><use href="#library"/></svg></button><button aria-label="File explorer"><svg class="ico"><use href="#folder"/></svg></button><button aria-label="View palette"><svg class="ico"><use href="#palette"/></svg></button><button aria-label="Appearances"><svg class="ico"><use href="#ball"/></svg></button><button aria-label="Custom properties"><svg class="ico"><use href="#list"/></svg></button></div>
    </div>
  </main>

  <div class="bottom-tabs">
    <div class="pager"><button aria-label="First"><svg viewBox="0 0 10 10"><path d="M8 1v8L4 5zM2 1h1v8H2z"/></svg></button><button aria-label="Previous"><svg viewBox="0 0 10 10"><path d="M7 1v8L3 5z"/></svg></button><button aria-label="Next"><svg viewBox="0 0 10 10"><path d="M3 1v8l4-4z"/></svg></button><button aria-label="Last"><svg viewBox="0 0 10 10"><path d="M2 1v8l4-4zM7 1h1v8H7z"/></svg></button></div>
    <div class="tabs model-tabs"><button class="on">Model</button><button>3D Views</button><button>Motion Study 1</button></div>
  </div>
  <footer class="status"><span class="part-name">Gap Distance 2</span><span class="cell">Fully Defined</span><span class="cell edit">Editing Sketch1</span><span class="cell units">IPS</span><i class="caret upward"></i><svg class="ico sm"><use href="#tag"/></svg></footer>
</div>
</body>
</html>
```
FILE: styles.css
```css
* { box-sizing: border-box; }
body { margin: 0; font-family: Lato, "Open Sans", sans-serif; font-size: 9px; line-height: 12px; color: #222; background: #f6f6f6; }
button, input, select, textarea { font: inherit; color: inherit; margin: 0; padding: 0; border: 0; background: none; border-radius: 0; }
h1, h2, h3 { margin: 0; font-size: 9px; }
a { color: inherit; text-decoration: none; }
.sprite { display: none; }
.app { display: flex; flex-direction: column; height: 100vh; overflow: hidden; }
.ico { width: 13px; height: 13px; flex: none; display: block; }
.ico.xs { width: 9px; height: 9px; }
.ico.sm { width: 10px; height: 10px; }
.caret { display: block; flex: none; width: 4px; height: 2px; background: #333; clip-path: polygon(0 0, 100% 0, 50% 100%); }
.caret.upward { transform: rotate(180deg); }
.dot { display: block; width: 4px; height: 4px; border: 1px solid #999; border-radius: 50%; }

.titlebar { display: flex; align-items: center; height: 21px; flex: none; border-bottom: 1px solid #999; background: #f8f8f8; }
.logo { position: relative; z-index: 1; align-self: flex-start; display: flex; align-items: center; gap: 3px; width: 92px; height: 23px; margin-left: 7px; padding-left: 3px; background: #f4f4f4; border: 1px solid #aaa; border-top: 0; }
.ds { width: 18px; height: 18px; flex: none; }
.logo-word { font: italic 10px "Open Sans", sans-serif; color: #d4252f; }
.menu { display: flex; gap: 9px; margin: 0 15px 0 17px; }
.quick { display: flex; align-items: center; align-self: stretch; margin-left: 6px; padding-left: 10px; border-left: 1px solid #999; gap: 2px; }
.quick button { display: flex; align-items: center; gap: 4px; padding-right: 2px; }
.quick button:first-child { padding: 0; }
.quick .plain { padding-right: 1px; }
.quick .select-tool { height: 17px; border: 1px solid #777; margin-right: 1px; gap: 2px; }
.select-tool span { background: #b5b5b5; height: 100%; padding: 1px 1px 0; }
.doc-title { flex: 1; text-align: center; font-weight: 400; font-size: 9px; }
.search { display: flex; align-items: center; gap: 4px; width: 160px; height: 19px; padding: 0 3px; border: 1px solid #555; background: #e9ecf1; }
.prompt { width: 12px; height: 12px; flex: none; }
.search input { min-width: 0; flex: 1; }
.search input::placeholder { color: #666; opacity: 1; }
.ico.lens { width: 15px; height: 15px; }
.window-buttons { display: flex; align-items: center; gap: 6px; padding: 0 4px 0 5px; color: #444; }
.question { font-size: 12px; font-weight: 700; width: 8px; }

.ribbon { display: flex; flex: none; height: 55px; padding: 4px 0 1px 4px; border-right: 1px solid #999; border-bottom: 1px solid #bbb; background: #f6f6f6; overflow: hidden; }
.cmd { display: flex; flex-direction: column; align-items: center; flex: none; padding-top: 2px; gap: 2px; white-space: nowrap; height: 50px; }
.cmd > .caret { margin-top: auto; margin-bottom: 6px; }
.cmd.two { padding-top: 7px; gap: 1px; }
.cmd:disabled { color: #aaa; }
.exit { width: 32px; padding: 0; border: 1px solid #bbb; }
.exit .face { display: flex; flex-direction: column; align-items: center; gap: 2px; width: 100%; height: 36px; padding-top: 1px; background: #b2b2b2; }
.exit > .caret { margin-bottom: 5px; }
.cmd.pressed { background: #b2b2b2; border: 1px solid #888; padding-top: 6px; }
.ruled { border-right: 1px solid #ccc; }
.w72 { width: 72px; } .w56 { width: 56px; } .w64 { width: 64px; } .w40 { width: 39px; }
.w102 { width: 102px; } .w32 { width: 33px; } .w30 { width: 30px; } .w45 { width: 45px; } .w63 { width: 63px; }
.tools { display: grid; grid-template-columns: repeat(3, 13px 12px) 13px; grid-template-rows: repeat(3, 16px); align-items: center; width: 96px; padding-left: 4px; border-left: 1px solid #ccc; border-right: 1px solid #ccc; }
.tools .caret { margin-left: 4px; }
.cmd-list { display: grid; grid-template-rows: repeat(3, 16px); width: 129px; padding: 0 3px 0 5px; border-right: 1px solid #ccc; }
.cmd-list button { display: flex; align-items: center; gap: 3px; }
.cmd-list .caret { margin-left: auto; }

.tab-row { display: flex; flex: none; height: 18px; background: #fff; }
.tabs { display: flex; }
.tabs button { background: #d3d3d3; border: 1px solid #999; border-left: 0; white-space: nowrap; }
.tabs button.on { background: #f8f8f8; border-color: transparent #999 transparent transparent; }
.ribbon-tabs { width: 439px; flex: none; }
.ribbon-tabs button { flex: 1 1 auto; padding: 0 5px; border-top: 0; }
.ribbon-tabs .on, .model-tabs .on { font-weight: 700; }
.view-tools { display: flex; align-items: center; gap: 3px; margin-left: 132px; }
.view-tools .caret { opacity: .6; margin-right: 3px; margin-left: 1px; }
.doc-buttons { display: flex; align-items: center; gap: 8px; margin-left: auto; padding-right: 8px; color: #888; }

.work { display: flex; flex: 1; min-height: 0; }
.panel { display: flex; flex-direction: column; width: 147px; flex: none; border-right: 1px solid #999; background: #f7f7f7; border-top: 1px solid #bbb; }
.grip { display: grid; place-items: center; height: 15px; flex: none; border-bottom: 1px solid #bbb; }
.manager-tabs { display: flex; height: 18px; flex: none; margin-top: 2px; padding-left: 1px; border-bottom: 1px solid #aaa; }
.manager-tabs button { display: grid; place-items: center; width: 26px; border: 1px solid #aaa; border-left: 0; border-bottom: 0; background: #d0d0d0; }
.manager-tabs .on { background: #f7f7f7; }
.panel-head { display: flex; align-items: center; height: 22px; flex: none; padding: 0 9px 0 7px; gap: 5px; }
.panel-head h2 { flex: 1; font-size: 10px; }
.q1 { color: #333; margin-right: 2px; }
.q2 { color: #287aa3; }
.ok { width: 24px; height: 19px; flex: none; padding-left: 5px; }
.value-tabs { height: 18px; margin-top: 7px; padding-left: 1px; flex: none; border-bottom: 1px solid #bbb; }
.value-tabs button { padding: 0 3px; border-bottom: 0; color: #555; font-size: 10px; }
.value-tabs + .group { margin-top: 10px; }
.group { flex: none; margin: 0 4px 5px 3px; border-top: 1px solid #bbb; }
.group h3 { display: flex; align-items: center; justify-content: space-between; height: 19px; padding: 1px 0 0 3px; color: #444; }
.btns { display: flex; }
.btns button { display: grid; place-items: center; width: 20px; height: 20px; margin-right: -1px; border: 1px solid #aaa; background: #fafafa; }
.btns button.on { background: #b7b7b7; border-color: #777; }
.style-btns { margin-left: 25px; margin-bottom: 5px; }
.style-btns button { width: 19px; }
.field { display: grid; grid-template-columns: 20px 1fr; align-items: center; column-gap: 8px; padding-right: 6px; }
.field > .ico { margin-left: 6px; width: 14px; height: 14px; }
.field.spaced { margin-top: 7px; }
.roomy { padding-bottom: 2px; }
.roomy h3 { height: 21px; padding-bottom: 2px; }
.drop { position: relative; }
.drop select { display: block; width: 100%; height: 17px; padding: 0 3px; border: 1px solid #aaa; background: #e1e1e1; appearance: none; }
.drop .ico { position: absolute; right: 2px; top: 4px; pointer-events: none; }
.box { width: 100%; height: 18px; padding: 0 3px; border: 1px solid #999; background: #fff; min-width: 0; }
.field.value { grid-template-columns: 22px 1fr 15px; column-gap: 6px; margin-top: 4px; padding-right: 2px; }
.field.value .btns { margin-left: 2px; }
.spin { display: grid; gap: 2px; justify-items: center; background: #eee; }
.dim-text { display: flex; height: 44px; padding-left: 2px; gap: 1px; padding-right: 2px; }
.stack { flex-direction: column; gap: 3px; width: 20px; flex: none; }
.dim-text textarea { flex: 1; min-width: 0; border: 1px solid #aaa; background: #fff; resize: none; padding: 0 1px; }
.rows { display: grid; gap: 2px; padding: 4px 0 0 2px; }
.rows .btns:first-child { margin-bottom: 1px; }
.dual label { display: flex; align-items: center; gap: 7px; }
.dual input { width: 10px; height: 10px; border: 1px solid #777; background: #fff; appearance: none; }

.canvas { position: relative; flex: 1; min-width: 0; background: #fff; }
.drawing { display: block; width: 100%; height: 100%; }
.dim-value { font-family: Lato, sans-serif; font-size: 15px; fill: #3f9af0; stroke: #3f9af0; stroke-width: .3px; }
.axis { font-size: 9px; }
.view-name { font-size: 11px; fill: #111; stroke: #111; stroke-width: .3px; }
.tree { position: absolute; left: 3px; top: 5px; display: flex; align-items: center; gap: 2px; font-size: 10px; }
.tri { width: 4px; height: 6px; margin-right: 5px; background: #222; clip-path: polygon(0 0, 100% 50%, 0 100%); }
.splitter { position: absolute; left: -1px; top: 258px; display: grid; place-items: center; width: 8px; height: 31px; background: #f7f7f7; border: 1px solid #aaa; border-left: 0; }
.confirm { position: absolute; right: 24px; top: 3px; width: 48px; height: 36px; }
.task-pane { position: absolute; right: 0; top: 19px; width: 21px; border: 1px solid #999; border-right: 0; }
.task-pane button { display: grid; place-items: center; width: 100%; height: 19px; background: #d0d0d0; border-bottom: 1px solid #999; }
.task-pane .on { background: #f8f8f8; }
.task-pane button:last-child { border: 0; }

.bottom-tabs { display: flex; flex: none; height: 14px; border-top: 1px solid #999; border-bottom: 1px solid #999; background: #f4f4f4; }
.pager { display: flex; width: 53px; background: #a4a4be; }
.pager button { display: grid; place-items: center; flex: 1; border-right: 1px solid #8585a0; }
.pager svg { width: 8px; height: 8px; fill: #777790; }
.model-tabs button { padding: 0 13px 0 7px; border-top: 0; border-bottom: 0; font-size: 10px; line-height: 12px; }
.model-tabs button:nth-child(2) { padding: 0 7px; }
.model-tabs .on { padding: 0 8px 0 10px; }
.status { display: flex; align-items: center; height: 14px; flex: none; padding: 2px 2px 0 1px; font-family: "Open Sans", sans-serif; }
.part-name { flex: 1; }
.cell { padding: 0 5px; border-right: 1px solid #ddd; white-space: nowrap; }
.cell.edit { padding-right: 14px; }
.units { padding-left: 32px; border: 0; margin-right: 18px; }
.status .ico { margin-left: 43px; }
```
